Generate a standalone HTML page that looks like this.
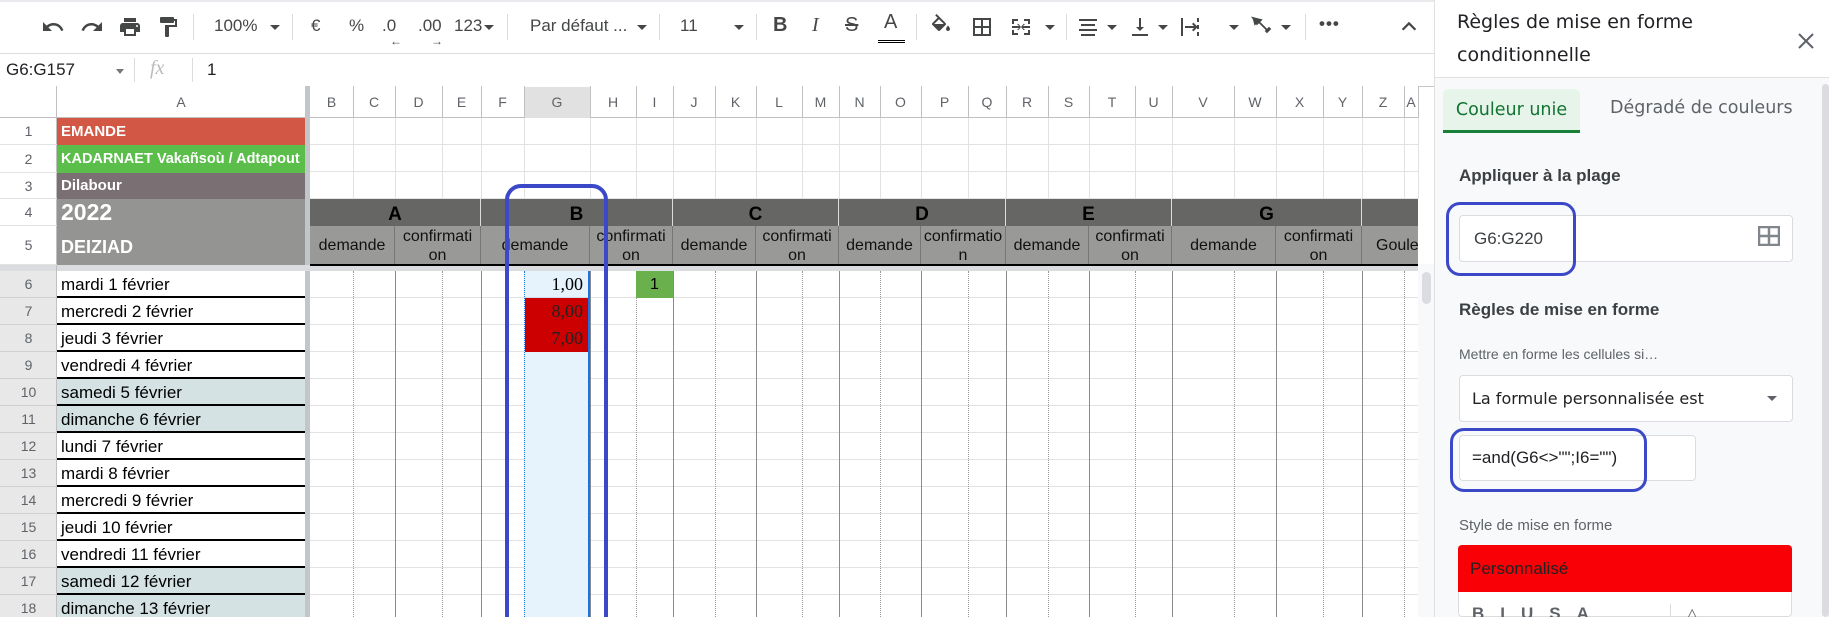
<!DOCTYPE html>
<html><head><meta charset="utf-8"><style>
*{margin:0;padding:0;box-sizing:border-box}
html{width:1829px;height:617px;overflow:hidden}
body{width:1829px;height:617px;overflow:hidden;background:#fff;font-family:"Liberation Sans",Arial,sans-serif;position:relative;color:#202124}
.a{position:absolute}
.ic{position:absolute;fill:#444746}
.tt{position:absolute;font-size:17px;color:#444746;top:16px;white-space:nowrap}
.sep{position:absolute;top:14px;width:1px;height:26px;background:#dadce0}
.dd{position:absolute;top:25px;width:0;height:0;border-left:5px solid transparent;border-right:5px solid transparent;border-top:5px solid #444746}
.hl{position:absolute;top:86px;height:32px;font-size:14px;color:#5f6368;text-align:center;line-height:32px}
.rn{position:absolute;left:0;width:57px;font-size:14px;color:#5f6368;text-align:center}
.ac{position:absolute;left:57px;width:248px;height:27px;border-bottom:2px solid #000;font-size:17px;line-height:27px;padding-left:4px;color:#000;white-space:nowrap}
.sub{position:absolute;top:226px;height:39px;background:#999a97;font-size:16px;color:#111;text-align:center;display:flex;align-items:center;justify-content:center;line-height:19px;border-right:1px solid #777}
.grp{position:absolute;top:199px;height:27px;background:#666764;font-size:19px;font-weight:bold;color:#000;text-align:center;line-height:31px;border-right:1px solid #ddd}
.vl{position:absolute;top:271px;height:346px;width:0}
</style></head><body>
<div class="a" style="left:0;top:0;width:1434px;height:2px;background:#e8eaed"></div>
<svg class="ic" style="left:41px;top:15px" width="24" height="24" viewBox="0 0 24 24"><path d="M12.5 8c-2.65 0-5.05.99-6.9 2.6L2 7v9h9l-3.62-3.62c1.39-1.16 3.16-1.88 5.12-1.88 3.54 0 6.55 2.31 7.6 5.5l2.37-.78C21.08 11.03 17.150 8 12.5 8z"/></svg>
<svg class="ic" style="left:80px;top:15px;transform:scaleX(-1)" width="24" height="24" viewBox="0 0 24 24"><path d="M12.5 8c-2.65 0-5.05.99-6.9 2.6L2 7v9h9l-3.62-3.62c1.39-1.16 3.16-1.88 5.12-1.88 3.54 0 6.55 2.31 7.6 5.5l2.37-.78C21.08 11.03 17.15 8 12.5 8z"/></svg>
<svg class="ic" style="left:118px;top:15px" width="24" height="24" viewBox="0 0 24 24"><path d="M19 8H5c-1.66 0-3 1.34-3 3v6h4v4h12v-4h4v-6c0-1.66-1.34-3-3-3zm-3 11H8v-5h8v5zm3-7c-.55 0-1-.45-1-1s.45-1 1-1 1 .45 1 1-.45 1-1 1zm-1-9H6v4h12V3z"/></svg>
<svg class="ic" style="left:156px;top:15px" width="24" height="24" viewBox="0 0 24 24"><path d="M18 4V3c0-.55-.45-1-1-1H5c-.55 0-1 .45-1 1v4c0 .55.45 1 1 1h12c.55 0 1-.45 1-1V6h1v4H9v11c0 .55.45 1 1 1h2c.55 0 1-.45 1-1v-9h8V4h-3z"/></svg>
<div class="sep" style="left:193px"></div>
<div class="tt" style="left:214px">100%</div><div class="dd" style="left:270px"></div>
<div class="sep" style="left:292px"></div>
<div class="tt" style="left:311px">€</div><div class="tt" style="left:349px">%</div>
<div class="tt" style="left:382px">.0</div><div class="a" style="left:390px;top:34px;font-size:12px;color:#444746">←</div>
<div class="tt" style="left:418px">.00</div><div class="a" style="left:431px;top:34px;font-size:12px;color:#444746">→</div>
<div class="tt" style="left:454px">123</div><div class="dd" style="left:484px"></div>
<div class="sep" style="left:507px"></div>
<div class="tt" style="left:530px;font-size:17px">Par défaut ...</div><div class="dd" style="left:637px"></div>
<div class="sep" style="left:659px"></div>
<div class="tt" style="left:680px;font-size:17px">11</div><div class="dd" style="left:734px"></div>
<div class="sep" style="left:756px"></div>
<div class="tt" style="left:773px;font-weight:bold;font-size:20px;top:14px">B</div>
<div class="tt" style="left:812px;font-style:italic;font-size:20px;top:14px;font-family:'Liberation Serif',serif">I</div>
<div class="tt" style="left:845px;text-decoration:line-through;font-size:20px;top:14px">S</div>
<div class="tt" style="left:884px;font-size:20px;top:11px">A</div><div class="a" style="left:878px;top:40px;width:27px;height:3px;border-top:1px solid #000;border-bottom:1px solid #000"></div>
<div class="sep" style="left:916px"></div>
<svg class="ic" style="left:929px;top:14px" width="24" height="24" viewBox="0 0 24 24"><path d="M16.56 8.94L7.62 0 6.21 1.41l2.38 2.38-5.15 5.150c-.59.59-.59 1.54 0 2.12l5.5 5.5c.29.29.68.44 1.06.44s.77-.15 1.06-.44l5.5-5.5c.59-.58.59-1.53 0-2.12zM5.21 10L10 5.21 14.79 10H5.21zM19 11.5s-2 2.17-2 3.5c0 1.1.9 2 2 2s2-.9 2-2c0-1.33-2-3.5-2-3.5z"/></svg>
<svg class="ic" style="left:970px;top:15px" width="24" height="24" viewBox="0 0 24 24"><path d="M3 3v18h18V3H3zm8 16H5v-6h6v6zm0-8H5V5h6v6zm8 8h-6v-6h6v6zm0-8h-6V5h6v6z"/></svg>
<svg class="ic" style="left:1009px;top:15px" width="24" height="24" viewBox="0 0 24 24"><path d="M3 4h6v2H5v3H3zM15 4h6v5h-2V6h-4zM3 15h2v3h4v2H3zM19 15h2v5h-6v-2h4zM3 11h7l-2-2 1.4-.1L12 12l-2.6 3.1L8 15l2-2H3zM21 11v2h-7l2 2-1.4.1L12 12l2.6-3.1L16 9l-2 2z"/></svg>
<div class="dd" style="left:1045px"></div>
<div class="sep" style="left:1066px"></div>
<svg class="ic" style="left:1076px;top:15px" width="24" height="24" viewBox="0 0 24 24"><path d="M3 4h18v2H3zM5 9h14v2H5zM3 14h18v2H3zM5 19h14v2H5z"/></svg><div class="dd" style="left:1107px"></div>
<svg class="ic" style="left:1128px;top:15px" width="24" height="24" viewBox="0 0 24 24"><path d="M4 19h16v2H4zM11 3h2v9h3l-4 4-4-4h3z"/></svg><div class="dd" style="left:1158px"></div>
<svg class="ic" style="left:1178px;top:15px" width="24" height="24" viewBox="0 0 24 24"><path d="M3 3h2v18H3zM19 3h2v4h-2zM19 10h2v4h-2zM19 17h2v4h-2zM7 11h9l-2-2 1.4-1.4L19.8 12l-4.4 4.4L14 15l2-2H7z"/></svg><div class="dd" style="left:1229px"></div>
<svg class="ic" style="left:1250px;top:14px" width="24" height="24" viewBox="0 0 24 24"><path d="M3 4l8 2-2 2 8 8 2-2 1 1-3 3-1-1 1-1-8-8-2 2zM4 6l4 1-3 3z" fill="none" stroke="#444746" stroke-width="1.8"/></svg><div class="dd" style="left:1281px"></div>
<div class="sep" style="left:1305px"></div>
<div class="tt" style="left:1319px;top:14px;font-weight:bold;letter-spacing:1px">•••</div>
<svg class="a" style="left:1398px;top:16px" width="22" height="22" viewBox="0 0 24 24"><path d="M5 15l7-7 7 7" fill="none" stroke="#444746" stroke-width="2.5"/></svg>
<div class="a" style="left:0;top:53px;width:1434px;height:1px;background:#dadce0"></div>
<div class="a" style="left:6px;top:60px;font-size:17px;color:#202124">G6:G157</div>
<div class="dd" style="left:116px;top:69px;border-top-color:#777;border-left-width:4px;border-right-width:4px"></div>
<div class="a" style="left:134px;top:58px;width:1px;height:24px;background:#dadce0"></div>
<div class="a" style="left:150px;top:57px;font-size:20px;color:#bbb;font-style:italic;font-family:'Liberation Serif',serif">fx</div>
<div class="a" style="left:192px;top:58px;width:1px;height:24px;background:#dadce0"></div>
<div class="a" style="left:207px;top:60px;font-size:17px">1</div>
<div class="a" style="left:0;top:86px;width:1434px;height:1px;background:#c7c7c7"></div>
<div class="a" style="left:0;top:86px;width:1418px;height:32px;background:#fff;border-bottom:1px solid #c0c0c0"></div>
<div class="a" style="left:524px;top:87px;width:66px;height:31px;background:#e1e1e1"></div>
<div id="hdr"></div>
<div class="a" style="left:305px;top:86px;width:5px;height:531px;background:#c3c6c8"></div>
<div class="a" style="left:0;top:265px;width:1418px;height:6px;background:#dadce0"></div>
<div class="a" style="left:310px;top:118px;width:1108px;height:81px;background:repeating-linear-gradient(to bottom,transparent 0,transparent 26px,#e2e2e2 26px,#e2e2e2 27px)"></div>
<div class="a" style="left:310px;top:271px;width:1108px;height:346px;background:#fff repeating-linear-gradient(to bottom,transparent 0,transparent 26px,#e2e2e2 26px,#e2e2e2 27px)"></div>
<div id="cols"></div>
<div class="a" style="left:0;top:271px;width:57px;height:346px;background:#e8e8e8"></div>
<div class="a" style="left:56px;top:86px;width:1px;height:531px;background:#c0c0c0"></div>
<div id="rows"></div>
<div class="a" style="left:57px;top:118px;width:248px;height:27px;background:#d35745;color:#fff;font-weight:bold;font-size:15px;line-height:28px;padding-left:4px">EMANDE</div>
<div class="a" style="left:57px;top:145px;width:248px;height:28px;background:#5bbd4a;color:#fff;font-weight:bold;font-size:14.5px;line-height:28px;padding-left:4px;white-space:nowrap;overflow:hidden">KADARNAET Vakañsoù / Adtapout</div>
<div class="a" style="left:57px;top:173px;width:248px;height:26px;background:#7a6f72;color:#fff;font-weight:bold;font-size:15px;line-height:26px;padding-left:4px">Dilabour</div>
<div class="a" style="left:57px;top:199px;width:248px;height:66px;background:#949592"></div>
<div class="a" style="left:61px;top:199px;color:#fff;font-weight:bold;font-size:23px">2022</div>
<div class="a" style="left:61px;top:237px;color:#fff;font-weight:bold;font-size:18px">DEIZIAD</div>
<div id="acol"></div>
<div class="grp" style="left:310px;width:171px">A</div>
<div class="grp" style="left:481px;width:192px">B</div>
<div class="grp" style="left:673px;width:166px">C</div>
<div class="grp" style="left:839px;width:167px">D</div>
<div class="grp" style="left:1006px;width:166px">E</div>
<div class="grp" style="left:1172px;width:190px">G</div>
<div class="grp" style="left:1362px;width:56px;border:none"></div>
<div class="sub" style="left:310px;width:85px">demande</div>
<div class="sub" style="left:395px;width:86px">confirmati<br>on</div>
<div class="sub" style="left:481px;width:109px">demande</div>
<div class="sub" style="left:590px;width:83px">confirmati<br>on</div>
<div class="sub" style="left:673px;width:83px">demande</div>
<div class="sub" style="left:756px;width:83px">confirmati<br>on</div>
<div class="sub" style="left:839px;width:82px">demande</div>
<div class="sub" style="left:921px;width:85px">confirmatio<br>n</div>
<div class="sub" style="left:1006px;width:83px">demande</div>
<div class="sub" style="left:1089px;width:83px">confirmati<br>on</div>
<div class="sub" style="left:1172px;width:104px">demande</div>
<div class="sub" style="left:1276px;width:86px">confirmati<br>on</div>
<div class="sub" style="left:1362px;width:56px;justify-content:flex-start;padding-left:14px;border:none;overflow:hidden">Goule</div>
<div class="a" style="left:310px;top:264px;width:1108px;height:2px;background:#000"></div>
<div class="a" style="left:524px;top:271px;width:66px;height:346px;background:#e6f3fd;border-left:1px dotted #1a73e8;border-right:2px solid #1a73e8"></div>
<div class="a" style="left:525px;top:271px;width:63px;height:27px;border-bottom:1px solid #d0dbe6;font-family:'Liberation Serif',serif;font-size:18px;text-align:right;padding-right:5px;line-height:27px;color:#000">1,00</div>
<div class="a" style="left:525px;top:298px;width:63px;height:54px;background:#cc0000"></div>
<div class="a" style="left:525px;top:298px;width:63px;font-family:'Liberation Serif',serif;font-size:18px;text-align:right;padding-right:5px;line-height:27px;color:#222">8,00<br>7,00</div>
<div class="a" style="left:636px;top:271px;width:37px;height:27px;background:#6ab04c;text-align:center;line-height:27px;font-size:16px;color:#000">1</div>
<div class="a" style="left:505px;top:184px;width:103px;height:460px;border:4px solid #3b49c8;border-radius:16px"></div>
<div class="a" style="left:1418px;top:264px;width:16px;height:353px;background:#f8f9fa"></div>
<div class="a" style="left:1422px;top:272px;width:9px;height:32px;background:#dadce0;border-radius:5px"></div>
<div class="a" style="left:1434px;top:0;width:395px;height:617px;background:#fff;border-left:1px solid #e0e0e0"></div>
<div class="a" style="left:1457px;top:6px;line-height:33px;color:#202124;font-family:'DejaVu Sans',sans-serif;font-size:19px">Règles de mise en forme<br>conditionnelle</div>
<svg class="a" style="left:1797px;top:32px" width="18" height="18" viewBox="0 0 18 18"><path d="M2 2L16 16M16 2L2 16" stroke="#5f6368" stroke-width="2"/></svg>
<div class="a" style="left:1434px;top:77px;width:395px;height:1px;background:#e0e0e0"></div>
<div class="a" style="left:1435px;top:78px;width:394px;height:539px;background:#f8f9fa"></div>
<div class="a" style="left:1822px;top:84px;width:7px;height:533px;background:#dadce0;border-radius:4px"></div>
<div class="a" style="left:1443px;top:89px;width:137px;height:44px;background:#e6f4ea;border-radius:6px 6px 0 0;border-bottom:3px solid #188038;color:#137333;text-align:center;line-height:42px;font-family:'DejaVu Sans',sans-serif;font-size:17.5px">Couleur unie</div>
<div class="a" style="left:1610px;top:98px;color:#5f6368;font-family:'DejaVu Sans',sans-serif;font-size:17.5px">Dégradé de couleurs</div>
<div class="a" style="left:1459px;top:166px;font-size:17px;font-weight:bold;color:#3c4043">Appliquer à la plage</div>
<div class="a" style="left:1459px;top:215px;width:334px;height:47px;background:#fff;border:1px solid #dadce0;border-radius:4px;font-size:17px;line-height:45px;padding-left:14px;color:#3c4043">G6:G220</div>
<svg class="a" style="left:1758px;top:226px" width="22" height="20" viewBox="0 0 22 20"><path d="M1 1h20v18H1zM11 1v18M1 10h20" fill="none" stroke="#80868b" stroke-width="2.5"/></svg>
<div class="a" style="left:1446px;top:202px;width:130px;height:74px;border:3px solid #3b49c8;border-radius:14px"></div>
<div class="a" style="left:1459px;top:300px;font-size:17px;font-weight:bold;color:#3c4043">Règles de mise en forme</div>
<div class="a" style="left:1459px;top:346px;font-size:14px;color:#5f6368">Mettre en forme les cellules si…</div>
<div class="a" style="left:1459px;top:375px;width:334px;height:47px;background:#fff;border:1px solid #dadce0;border-radius:4px;line-height:45px;padding-left:12px;color:#202124;font-family:'DejaVu Sans',sans-serif;font-size:16px">La formule personnalisée est</div>
<div class="dd" style="left:1767px;top:396px;border-top-color:#5f6368"></div>
<div class="a" style="left:1459px;top:435px;width:237px;height:46px;background:#fff;border:1px solid #dadce0;border-radius:4px;font-size:17px;line-height:44px;padding-left:12px;color:#202124">=and(G6&lt;&gt;"";I6="")</div>
<div class="a" style="left:1450px;top:428px;width:197px;height:64px;border:3px solid #3b49c8;border-radius:14px"></div>
<div class="a" style="left:1459px;top:517px;font-size:15px;color:#5f6368">Style de mise en forme</div>
<div class="a" style="left:1458px;top:545px;width:334px;height:72px;background:#fff;border:1px solid #dadce0;border-radius:4px"></div>
<div class="a" style="left:1458px;top:545px;width:334px;height:47px;background:#f80006;border-radius:4px 4px 0 0;font-size:17px;line-height:47px;padding-left:12px;color:#222">Personnalisé</div>
<div class="a" style="left:1472px;top:604px;font-size:17px;font-weight:bold;color:#5f6368;letter-spacing:16px">BIUSA</div>
<div class="a" style="left:1670px;top:604px;width:1px;height:13px;background:#dadce0"></div>
<div class="a" style="left:1686px;top:604px;font-size:16px;color:#5f6368">&#9651;</div>
<script>
var b=[310,353,395,442,481,524,590,636,673,715,756,802,839,880,921,968,1006,1048,1089,1135,1172,1234,1276,1323,1362,1404,1418];
var L="BCDEFGHIJKLMNOPQRSTUVWXYZ".split("");L.push("A");
var h="";
for(var i=0;i<b.length-1;i++){h+='<div class="hl" style="left:'+b[i]+'px;width:'+(b[i+1]-b[i])+'px">'+L[i]+'</div>';
h+='<div class="a" style="left:'+b[i+1]+'px;top:86px;width:1px;height:32px;background:#c0c0c0"></div>';
h+='<div class="a" style="left:'+b[i+1]+'px;top:118px;width:1px;height:81px;background:#e2e2e2"></div>';}
h+='<div class="hl" style="left:57px;width:248px">A</div>';
document.getElementById("hdr").innerHTML=h;
var solid=[395,481,590,673,756,839,921,1006,1089,1172,1276,1362];var c="";
for(var i=1;i<b.length-1;i++){var s=solid.indexOf(b[i])>=0;
c+='<div class="vl" style="left:'+b[i]+'px;border-left:1px '+(s?'solid #8a8a8a':'dotted #9a9a9a')+'"></div>';}
document.getElementById("cols").innerHTML=c;
var r="";var tops=[118,145,173,199,226];
for(var i=0;i<5;i++){var hh=(i==4?265:tops[i+1])-tops[i];r+='<div class="rn" style="top:'+tops[i]+'px;height:'+hh+'px;line-height:'+hh+'px;border-bottom:1px solid #e2e2e2">'+(i+1)+'</div>';}
var names=["mardi 1 février","mercredi 2 février","jeudi 3 février","vendredi 4 février","samedi 5 février","dimanche 6 février","lundi 7 février","mardi 8 février","mercredi 9 février","jeudi 10 février","vendredi 11 février","samedi 12 février","dimanche 13 février"];
var teal=[4,5,11,12];var a="";
for(var i=0;i<13;i++){var t=271+27*i;
r+='<div class="rn" style="top:'+t+'px;height:27px;line-height:27px;border-bottom:1px solid #d0d0d0">'+(i+6)+'</div>';
a+='<div class="ac" style="top:'+t+'px;background:'+(teal.indexOf(i)>=0?'#d4e2e3':'#fff')+'">'+names[i]+'</div>';}
document.getElementById("rows").innerHTML=r;document.getElementById("acol").innerHTML=a;
</script>
</body></html>
